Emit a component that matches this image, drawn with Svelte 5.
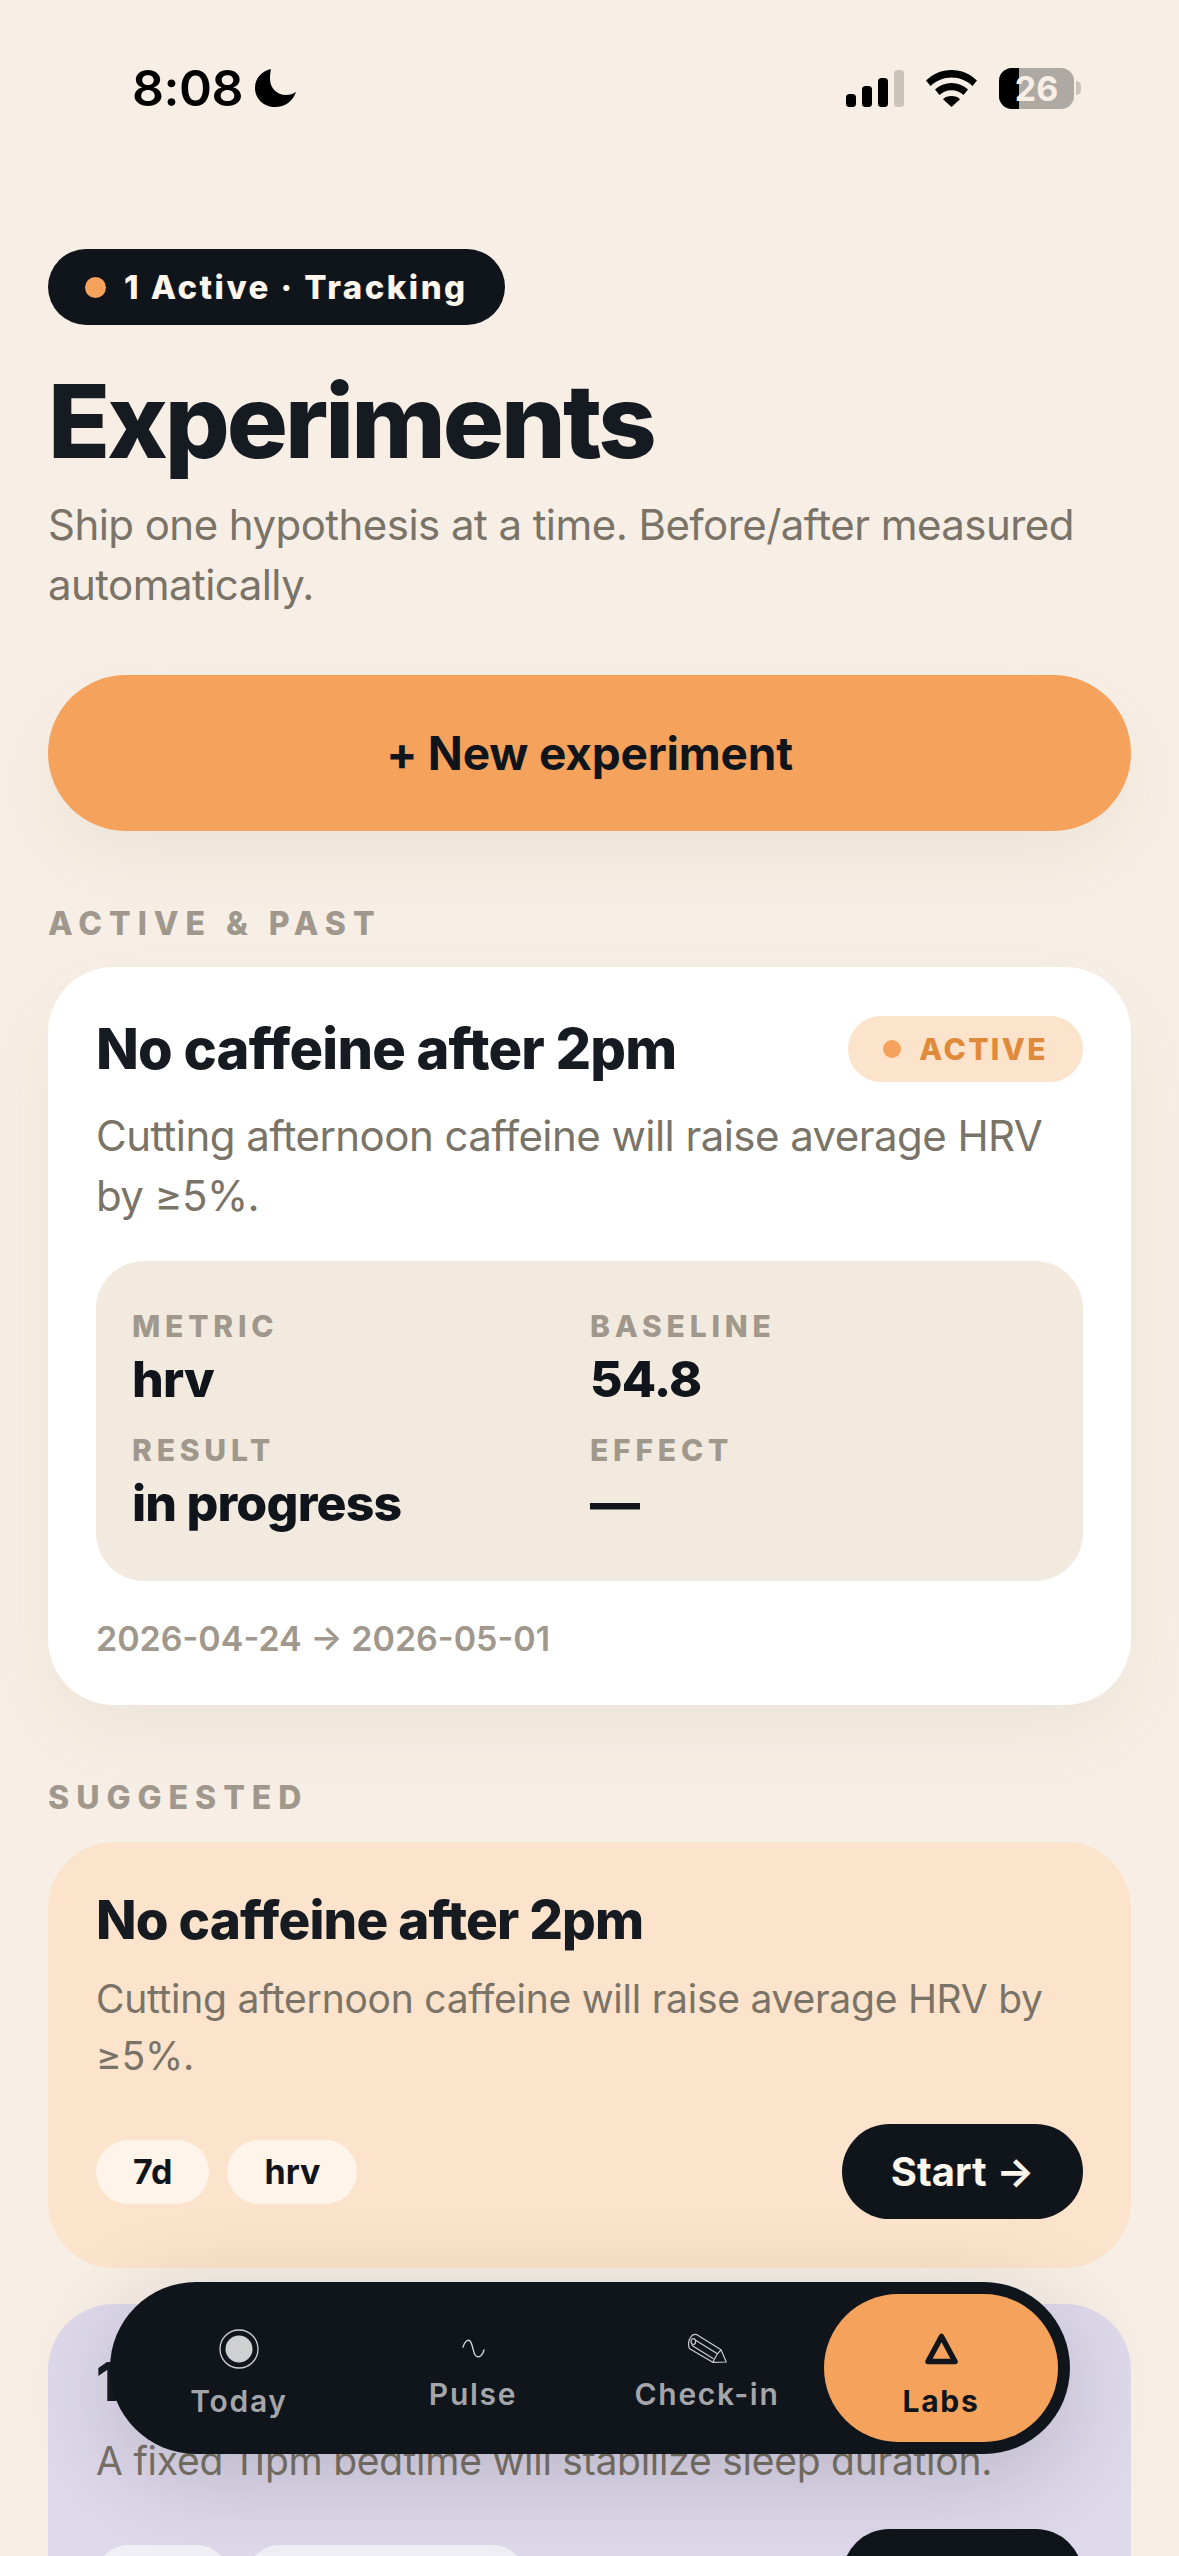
<script lang="ts">
	const tabs = ['Today', 'Pulse', 'Check-in', 'Labs'];

	const suggestions = [
		{
			title: 'No caffeine after 2pm',
			desc: 'Cutting afternoon caffeine will raise average HRV by ≥5%.',
			tags: ['7d', 'hrv'],
			tone: 'peach'
		},
		{
			title: '11pm bedtime',
			desc: 'A fixed 11pm bedtime will stabilize sleep duration.',
			tags: ['14d', 'sleep_hours'],
			tone: 'lilac'
		}
	];

	const stats = [
		{ label: 'METRIC', value: 'hrv' },
		{ label: 'BASELINE', value: '54.8' },
		{ label: 'RESULT', value: 'in progress' },
		{ label: 'EFFECT', value: '—' }
	];
</script>

<div class="screen">
	<div class="status">
		<div class="clock">
			<span>8:08</span>
			<svg width="41" height="38" viewBox="0 0 41 38"><path d="M16 0C6.500 2 0 9.500 0 19c0 11 9 19 20 19 10 0 18-6 21-15-3 2-6 3-10 3C22 26 15 19 15 10c0-4 .4-7 1-10z" fill="#000" /></svg>
		</div>
		<div class="indicators">
			<svg width="58" height="37" viewBox="0 0 58 37">
				<rect x="0" y="24" width="10" height="13" rx="3.500" fill="#000" />
				<rect x="16" y="16" width="10" height="21" rx="3.500" fill="#000" />
				<rect x="32" y="8" width="10" height="29" rx="3.500" fill="#000" />
				<rect x="48" y="0" width="10" height="37" rx="3.500" fill="#c9c3bb" />
			</svg>
			<svg width="51" height="37" viewBox="0 0 51 37">
				<path d="M25.500 0C15.500 0 7 4 0 10.500l4.500 5.500C10.500 10.500 17.500 7.500 25.500 7.500S40.500 10.500 46.500 16l4.500-5.500C44 4 35.500 0 25.500 0z" fill="#000" />
				<path d="M25.500 13c-6.500 0-12 2.300-16.500 6.500l4.500 5.500c3.300-3 7.300-4.800 12-4.800s8.700 1.800 12 4.800l4.500-5.500C37.500 15.300 32 13 25.500 13z" fill="#000" />
				<path d="M25.500 26c-3.500 0-6.500 1.200-8.500 3.200L25.500 37 34 29.200C32 27.200 29 26 25.500 26z" fill="#000" />
			</svg>
			<div class="battery">
				<div class="cell"><div class="charge"></div><span>26</span></div>
				<div class="nub"></div>
			</div>
		</div>
	</div>

	<main class="content">
		<div class="pill"><i class="dot"></i>1 Active · Tracking</div>
		<h1>Experiments</h1>
		<p class="lead">Ship one hypothesis at a time. Before/after measured automatically.</p>
		<button class="new">+ New experiment</button>

		<h2 class="section first">ACTIVE &amp; PAST</h2>
		<section class="card active-card">
			<div class="card-head">
				<h3>No caffeine after 2pm</h3>
				<span class="state"><i class="dot small"></i>ACTIVE</span>
			</div>
			<p class="hypothesis">Cutting afternoon caffeine will raise average HRV by ≥5%.</p>
			<div class="stats">
				{#each stats as s}
					<div class="stat">
						<span class="stat-label">{s.label}</span>
						<span class="stat-value">{s.value}</span>
					</div>
				{/each}
			</div>
			<div class="dates">2026-04-24 → 2026-05-01</div>
		</section>

		<h2 class="section second">SUGGESTED</h2>
		{#each suggestions as s}
			<section class="card suggestion {s.tone}">
				<h3>{s.title}</h3>
				<p>{s.desc}</p>
				<div class="actions">
					<div class="tags">
						{#each s.tags as t}<span class="tag">{t}</span>{/each}
					</div>
					<button class="start">Start →</button>
				</div>
			</section>
		{/each}
	</main>

	<nav class="tabbar">
		{#each tabs as t, i}
			<div class="tab tab-{i}" class:current={t === 'Labs'}>
				<div class="icon">
					{#if i === 0}
						<svg width="40" height="40" viewBox="0 0 40 40"><circle cx="20" cy="20" r="19" fill="none" stroke="#cfd0d1" stroke-width="1.300" /><circle cx="20" cy="20" r="13.500" fill="#cfd0d1" /></svg>
					{:else if i === 1}
						<svg width="23" height="20" viewBox="0 0 23 20"><path d="M1 8C3 2 6 0 8 2c3 3 3 13 6 15 3 2 6.500 0 8-6" fill="none" stroke="#cfd0d1" stroke-width="1.400" stroke-linecap="round" /></svg>
					{:else if i === 2}
						<svg width="41" height="31" viewBox="200 92 124 94" fill="none" stroke="#cfd0d1" stroke-width="3.500" stroke-linejoin="round">
							<path d="M230 97 303 143 319 180 278 181 208 140C202 130 204 112 212 103 217 97 224 95 230 97z" />
							<path d="M226 114 292 155 278 181M303 143 292 155M214 129 280 170" />
							<ellipse cx="219" cy="118" rx="7" ry="9" />
						</svg>
					{:else}
						<svg width="33" height="32" viewBox="0 0 33 32"><path d="M16.500 3.500 30 28.500H3z" fill="none" stroke="#10151c" stroke-width="5.500" stroke-linejoin="round" /></svg>
					{/if}
				</div>
				<span>{t}</span>
			</div>
		{/each}
	</nav>
</div>

<style>
	:global(body) {
		margin: 0;
		background: #f7efe6;
	}

	.screen {
		position: relative;
		width: 1179px;
		height: 2556px;
		overflow: hidden;
		background: #f7efe6;
		font-family: Inter, 'Noto Sans', sans-serif;
		color: #10151c;
	}

	.status {
		display: flex;
		justify-content: space-between;
		align-items: center;
		height: 42px;
		padding: 67px 98px 0 132px;
	}

	.clock {
		display: flex;
		align-items: center;
		gap: 12px;
		font-size: 50px;
		font-weight: 600;
		color: #000;
		letter-spacing: -0.5px;
	}

	.indicators {
		display: flex;
		align-items: center;
		gap: 22px;
	}

	.battery {
		display: flex;
		align-items: center;
		gap: 2px;
	}

	.cell {
		position: relative;
		display: flex;
		align-items: center;
		justify-content: center;
		width: 75px;
		height: 41px;
		border-radius: 13px;
		overflow: hidden;
		background: #aea9a2;
		color: #f7efe6;
		font-size: 34px;
		font-weight: 700;
	}

	.cell span {
		position: relative;
	}

	.charge {
		position: absolute;
		left: 0;
		top: 0;
		bottom: 0;
		width: 20px;
		background: #000;
	}

	.nub {
		width: 5px;
		height: 14px;
		border-radius: 0 7px 7px 0;
		background: #c9c3bb;
	}

	.content {
		padding: 140px 48px 0;
	}

	.pill {
		display: inline-flex;
		align-items: center;
		gap: 18px;
		height: 76px;
		padding: 0 37px;
		box-sizing: border-box;
		border-radius: 38px;
		background: #10151c;
		color: #fdf6ec;
		font-size: 33px;
		font-weight: 800;
		letter-spacing: 2.450px;
		white-space: nowrap;
	}

	.dot {
		width: 21px;
		height: 21px;
		border-radius: 50%;
		background: #f5a25d;
	}

	.dot.small {
		width: 18px;
		height: 18px;
	}

	h1 {
		margin: 37px 0 0;
		font-size: 102px;
		line-height: 118px;
		font-weight: 800;
		letter-spacing: -3px;
		color: #161b22;
	}

	.lead {
		margin: 15px 0 0;
		font-size: 42px;
		line-height: 60px;
		letter-spacing: -0.550px;
		color: #7a7368;
	}

	.new {
		display: block;
		width: 100%;
		height: 156px;
		margin-top: 60px;
		border: none;
		border-radius: 78px;
		background: #f5a25d;
		color: #10151c;
		font: 700 46px Inter, sans-serif;
		letter-spacing: -0.200px;
		box-shadow: 0 30px 70px rgba(120, 80, 40, 0.07);
	}

	.section {
		margin: 0;
		font-size: 32px;
		line-height: 40px;
		font-weight: 800;
		letter-spacing: 7px;
		color: #a0988c;
	}

	.section.first {
		margin-top: 73px;
	}

	.section.second {
		margin-top: 73px;
	}

	.section.first + .card {
		margin-top: 23px;
	}

	.card {
		box-sizing: border-box;
		border-radius: 66px;
		margin-top: 24px;
		padding: 48px;
	}

	.active-card {
		height: 738px;
		background: #fff;
		box-shadow: 0 30px 80px rgba(120, 80, 40, 0.07);
	}

	.card-head {
		display: flex;
		align-items: center;
		justify-content: space-between;
	}

	h3 {
		margin: 0;
		font-weight: 800;
		color: #161b22;
	}

	.card-head h3 {
		font-size: 56px;
		letter-spacing: -0.800px;
	}

	.state {
		display: inline-flex;
		align-items: center;
		gap: 18px;
		height: 66px;
		padding: 0 35px;
		border-radius: 33px;
		background: #fce3cb;
		color: #e08a3c;
		font-size: 30px;
		font-weight: 800;
		letter-spacing: 2.400px;
	}

	.hypothesis {
		margin: 23px 0 0;
		font-size: 42px;
		line-height: 60px;
		letter-spacing: -0.550px;
		color: #7a7368;
	}

	.stats {
		display: grid;
		grid-template-columns: 458px 1fr;
		row-gap: 25px;
		height: 320px;
		box-sizing: border-box;
		margin-top: 35px;
		padding: 48px 36px 0;
		align-content: start;
		border-radius: 48px;
		background: #f3eadf;
	}

	.stat {
		display: flex;
		flex-direction: column;
		gap: 7px;
	}

	.stat-label {
		font-size: 30px;
		line-height: 34px;
		font-weight: 800;
		letter-spacing: 4.800px;
		color: #a0988c;
	}

	.stat-value {
		font-size: 50px;
		line-height: 58px;
		font-weight: 800;
		letter-spacing: -0.800px;
		color: #10151c;
	}

	.dates {
		margin-top: 37px;
		font-size: 34px;
		line-height: 42px;
		font-weight: 600;
		color: #a0988c;
	}

	.suggestion h3 {
		font-size: 53px;
		line-height: 60px;
		letter-spacing: -0.850px;
	}

	.suggestion p {
		margin: 20px 0 0;
		font-size: 39px;
		line-height: 57px;
		letter-spacing: -0.250px;
		color: #7a7368;
	}

	.peach {
		height: 426px;
		background: #fce3cb;
	}

	.lilac {
		height: 400px;
		margin-top: 36px;
		background: #dfd9ec;
	}

	.actions {
		display: flex;
		align-items: center;
		justify-content: space-between;
		margin-top: 40px;
	}

	.tags {
		display: flex;
		gap: 18px;
	}

	.tag {
		display: flex;
		align-items: center;
		height: 64px;
		padding: 0 37px;
		border-radius: 32px;
		background: rgba(255, 255, 255, 0.6);
		font-size: 34px;
		font-weight: 700;
		color: #10151c;
	}

	.start {
		height: 95px;
		width: 241px;
		border: none;
		border-radius: 48px;
		background: #10151c;
		color: #fdf6ec;
		font: 700 40px Inter, sans-serif;
	}

	.tabbar {
		position: absolute;
		left: 110px;
		top: 2282px;
		display: grid;
		grid-template-columns: repeat(4, 234px);
		box-sizing: border-box;
		width: 960px;
		height: 172px;
		padding: 12px;
		border-radius: 86px;
		background: #10151c;
		box-shadow: 0 24px 100px rgba(16, 21, 28, 0.18);
	}

	.tab {
		display: flex;
		flex-direction: column;
		align-items: center;
		justify-content: center;
		gap: 6px;
		border-radius: 74px;
		font-size: 30px;
		line-height: 30px;
		font-weight: 600;
		letter-spacing: 1.700px;
		color: #a5a6aa;
	}

	.icon {
		display: flex;
		align-items: center;
		justify-content: center;
		height: 46px;
	}

	.icon svg {
		margin-bottom: 3px;
	}

	.tab-0 .icon,
	.tab-3 .icon {
		height: 60px;
	}

	.current {
		background: #f5a25d;
		color: #10151c;
		font-weight: 700;
	}
</style>
